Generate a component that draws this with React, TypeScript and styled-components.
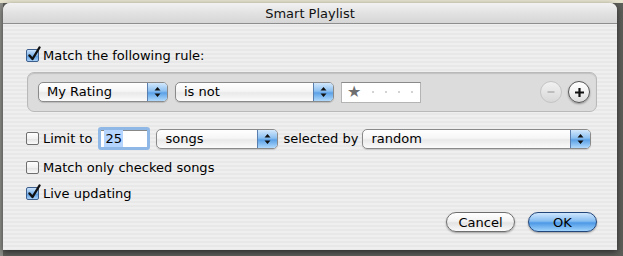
import React from "react";
import styled, { createGlobalStyle, css } from "styled-components";

const Global = createGlobalStyle`
  html, body { margin: 0; padding: 0; }
  body { font-family: "DejaVu Sans", "Liberation Sans", sans-serif; background: #6b6b68; }
`;

const Desktop = styled.div`
  width: 623px;
  height: 256px;
  overflow: hidden;
  box-sizing: border-box;
  padding: 3px 0 0 3px;
  background:
    linear-gradient(to bottom, #e6e4cf 0, #e6e4cf 3px, transparent 3px),
    linear-gradient(to right, #8c8c88 0, #8c8c88 3px, #5d5d5a 3px);
`;

const Window = styled.div`
  width: 614px;
  height: 247px;
  border-radius: 7px 7px 0 0;
  overflow: hidden;
  box-shadow: 0 2px 6px rgba(0, 0, 0, 0.55);
  display: flex;
  flex-direction: column;
  background: repeating-linear-gradient(to bottom, #efefef 0, #efefef 2px, #e8e8e8 2px, #e8e8e8 4px);
`;

const TitleBar = styled.div`
  height: 21px;
  flex: none;
  border-bottom: 1px solid #8e8e8e;
  background: linear-gradient(to bottom, #f2f2f2 0%, #e2e2e2 50%, #d6d6d6 100%);
  display: flex;
  align-items: center;
  justify-content: center;
  font-size: 13px;
  color: #111;
  padding-top: 1px;
  box-sizing: border-box;
`;

const Body = styled.div`
  flex: 1;
  padding: 23px 20px 0 23px;
  display: flex;
  flex-direction: column;
`;

const Row = styled.div<{ $mt?: number; $h?: number }>`
  display: flex;
  align-items: center;
  height: ${(p) => p.$h ?? 16}px;
  margin-top: ${(p) => p.$mt ?? 0}px;
  font-size: 13px;
  color: #000;
`;

const Label = styled.span<{ $ml?: number }>`
  margin-left: ${(p) => p.$ml ?? 0}px;
  white-space: nowrap;
`;

const Box = styled.span<{ $checked?: boolean }>`
  position: relative;
  flex: none;
  border: 1px solid #6f6f6f;
  border-radius: 2px;
  box-sizing: border-box;
  width: 13px;
  height: 13px;
  ${(p) =>
    p.$checked
      ? css`
          background: linear-gradient(to bottom, #c9e2fb 0%, #7fb4ea 50%, #5c9ee3 55%, #a7d0f7 100%);
          border-color: #3e5f8c;
        `
      : css`
          background: linear-gradient(to bottom, #ffffff 0%, #f1f1f1 50%, #e4e4e4 55%, #fafafa 100%);
        `}
  svg {
    position: absolute;
    left: 0px;
    top: -4px;
  }
`;

const Checkbox = ({ checked }: { checked?: boolean }) => (
  <Box $checked={checked}>
    {checked && (
      <svg width="14" height="16" viewBox="0 0 14 16">
        <path d="M2.5 9.5 L5.5 13 L12.5 1.5" fill="none" stroke="#111" strokeWidth="2.4" strokeLinecap="round" strokeLinejoin="round" />
      </svg>
    )}
  </Box>
);

const RuleBox = styled.div`
  margin-top: 9px;
  margin-left: 1px;
  width: 570px;
  height: 40px;
  box-sizing: border-box;
  border: 1px solid #b9b9b9;
  border-radius: 7px;
  background: #dcdcdc;
  box-shadow: inset 0 1px 1px rgba(0, 0, 0, 0.12);
  display: flex;
  align-items: center;
  padding: 0 6px 0 10px;
`;

const Popup = styled.div<{ $w: number; $ml?: number }>`
  width: ${(p) => p.$w}px;
  margin-left: ${(p) => p.$ml ?? 0}px;
  height: 20px;
  flex: none;
  box-sizing: border-box;
  border: 1px solid #8a8a8a;
  border-radius: 5px;
  background: linear-gradient(to bottom, #ffffff 0%, #f6f6f6 45%, #e9e9e9 55%, #fbfbfb 100%);
  display: flex;
  align-items: stretch;
  overflow: hidden;
  font-size: 13px;
  box-shadow: 0 1px 1px rgba(0, 0, 0, 0.15);
`;

const PopupText = styled.span`
  flex: 1;
  padding-left: 8px;
  display: flex;
  align-items: center;
  padding-bottom: 1px;
`;

const PopupArrows = styled.span`
  width: 19px;
  flex: none;
  border-left: 1px solid #5a7fae;
  background: linear-gradient(to bottom, #d3e8fc 0%, #8cc0f1 45%, #5ba1e6 55%, #b1dafc 100%);
  display: flex;
  align-items: center;
  justify-content: center;
`;

const Arrows = () => (
  <svg width="7" height="12" viewBox="0 0 7 12">
    <path d="M3.5 1 L6.5 4.5 L0.5 4.5 Z M3.5 11 L6.5 7.5 L0.5 7.5 Z" fill="#111" />
  </svg>
);

const Select = ({ w, ml, children }: { w: number; ml?: number; children: React.ReactNode }) => (
  <Popup $w={w} $ml={ml}>
    <PopupText>{children}</PopupText>
    <PopupArrows>
      <Arrows />
    </PopupArrows>
  </Popup>
);

const StarField = styled.div`
  margin-left: 7px;
  width: 80px;
  height: 21px;
  box-sizing: border-box;
  background: #fff;
  border: 1px solid #b4b4b4;
  border-top-color: #8a8a8a;
  display: flex;
  align-items: center;
  padding-left: 5px;
  gap: 11px;
`;

const Star = styled.span`
  font-size: 16px;
  color: #6e6e6e;
  line-height: 1;
`;

const Dot = styled.span`
  width: 2px;
  height: 2px;
  border-radius: 1px;
  background: #c4c4c4;
`;

const Spacer = styled.div`
  flex: 1;
`;

const RoundBtn = styled.div<{ $disabled?: boolean }>`
  width: 22px;
  height: 22px;
  border-radius: 50%;
  box-sizing: border-box;
  flex: none;
  display: flex;
  align-items: center;
  justify-content: center;
  margin-left: 6px;
  ${(p) =>
    p.$disabled
      ? css`
          border: 1px solid #c4c4c4;
          background: linear-gradient(to bottom, #f1f1f1, #d8d8d8);
        `
      : css`
          border: 1px solid #555;
          background: linear-gradient(to bottom, #ffffff 0%, #f2f2f2 50%, #dcdcdc 100%);
          box-shadow: 0 1px 2px rgba(0, 0, 0, 0.35);
        `}
`;

const NumField = styled.div`
  margin-left: 6px;
  width: 52px;
  height: 23px;
  box-sizing: border-box;
  border: 3px solid #8fb8e6;
  border-radius: 3px;
  background: #fff;
  box-shadow: inset 0 1px 0 #888;
  display: flex;
  align-items: center;
  padding-left: 3px;
  font-size: 13px;
`;

const Selected = styled.span`
  background: #b5d5ff;
  padding: 1px 1px;
`;

const ButtonBar = styled.div`
  margin-top: 11px;
  display: flex;
  justify-content: flex-end;
  gap: 13px;
`;

const PushButton = styled.div<{ $default?: boolean }>`
  width: 69px;
  height: 20px;
  box-sizing: border-box;
  border-radius: 10px;
  display: flex;
  align-items: center;
  justify-content: center;
  font-size: 13px;
  color: #000;
  box-shadow: 0 1px 2px rgba(0, 0, 0, 0.35);
  ${(p) =>
    p.$default
      ? css`
          border: 1px solid #23467a;
          background: linear-gradient(to bottom, #cfe6fd 0%, #86bdf2 45%, #4d99e6 55%, #9fd3fc 100%);
        `
      : css`
          border: 1px solid #6e6e6e;
          background: linear-gradient(to bottom, #ffffff 0%, #f3f3f3 45%, #e3e3e3 55%, #fafafa 100%);
        `}
`;

export default function App() {
  return (
    <>
      <Global />
      <Desktop>
        <Window>
          <TitleBar>Smart Playlist</TitleBar>
          <Body>
            <Row>
              <Checkbox checked />
              <Label $ml={4}>Match the following rule:</Label>
            </Row>
            <RuleBox>
              <Select w={130}>My Rating</Select>
              <Select w={159} ml={7}>is not</Select>
              <StarField>
                <Star>★</Star>
                <Dot />
                <Dot />
                <Dot />
                <Dot />
              </StarField>
              <Spacer />
              <RoundBtn $disabled>
                <svg width="10" height="10" viewBox="0 0 10 10">
                  <path d="M1.5 5 H8.5" stroke="#bdbdbd" strokeWidth="2" />
                </svg>
              </RoundBtn>
              <RoundBtn>
                <svg width="11" height="11" viewBox="0 0 11 11">
                  <path d="M1 5.5 H10 M5.5 1 V10" stroke="#111" strokeWidth="2.2" />
                </svg>
              </RoundBtn>
            </RuleBox>
            <Row $mt={15} $h={23}>
              <Checkbox />
              <Label $ml={4}>Limit to</Label>
              <NumField>
                <Selected>25</Selected>
              </NumField>
              <Select w={122} ml={6}>songs</Select>
              <Label $ml={5}>selected by</Label>
              <Select w={229} ml={4}>random</Select>
            </Row>
            <Row $mt={9}>
              <Checkbox />
              <Label $ml={4}>Match only checked songs</Label>
            </Row>
            <Row $mt={10}>
              <Checkbox checked />
              <Label $ml={4}>Live updating</Label>
            </Row>
            <ButtonBar>
              <PushButton>Cancel</PushButton>
              <PushButton $default>OK</PushButton>
            </ButtonBar>
          </Body>
        </Window>
      </Desktop>
    </>
  );
}
